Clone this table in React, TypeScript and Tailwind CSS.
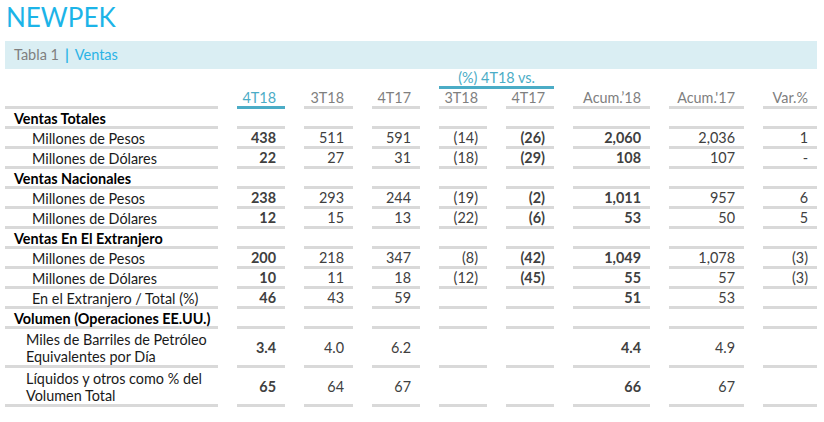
// Ventas table — NEWPEK quarterly report snippet.

type Row = {
  label: string[];
  kind: 'cat' | 'sub' | 'sub2';
  values?: string[];
};

const ROWS: Row[] = [
  { label: ['Ventas Totales'], kind: 'cat' },
  { label: ['Millones de Pesos'], kind: 'sub', values: ['438', '511', '591', '(14)', '(26)', '2,060', '2,036', '1'] },
  { label: ['Millones de Dólares'], kind: 'sub', values: ['22', '27', '31', '(18)', '(29)', '108', '107', '-'] },
  { label: ['Ventas Nacionales'], kind: 'cat' },
  { label: ['Millones de Pesos'], kind: 'sub', values: ['238', '293', '244', '(19)', '(2)', '1,011', '957', '6'] },
  { label: ['Millones de Dólares'], kind: 'sub', values: ['12', '15', '13', '(22)', '(6)', '53', '50', '5'] },
  { label: ['Ventas En El Extranjero'], kind: 'cat' },
  { label: ['Millones de Pesos'], kind: 'sub', values: ['200', '218', '347', '(8)', '(42)', '1,049', '1,078', '(3)'] },
  { label: ['Millones de Dólares'], kind: 'sub', values: ['10', '11', '18', '(12)', '(45)', '55', '57', '(3)'] },
  { label: ['En el Extranjero / Total (%)'], kind: 'sub', values: ['46', '43', '59', '', '', '51', '53', ''] },
  { label: ['Volumen (Operaciones EE.UU.)'], kind: 'cat' },
  { label: ['Miles de Barriles de Petróleo', 'Equivalentes por Día'], kind: 'sub2', values: ['3.4', '4.0', '6.2', '', '', '4.4', '4.9', ''] },
  { label: ['Líquidos y otros como % del', 'Volumen Total'], kind: 'sub2', values: ['65', '64', '67', '', '', '66', '67', ''] },
];

const HEADERS = ['4T18', '3T18', '4T17', '3T18', '4T17', 'Acum.’18', "Acum.'17", 'Var.%'];

// columns drawn in bold: 4T18, (%) 4T17, Acum.'18
const BOLD_COLS = [0, 4, 5];

const cellBase = 'border-b-[3px] border-[#d9d9d9] flex items-center';

function DataRow({ row }: { row: Row }) {
  const tall = row.kind === 'sub2';
  const h = tall ? 'h-[39px]' : 'h-5';
  const pad = row.kind === 'cat' ? 'pl-[9px]' : row.kind === 'sub' ? 'pl-[27px]' : 'pl-[21px]';
  return (
    <>
      <div
        className={`${cellBase} ${h} ${pad} ${
          row.kind === 'cat' ? 'font-bold text-black' : 'text-[#1a1a1a]'
        }`}
      >
        <div className="leading-[17px] pt-[1px]">
          {row.label.map((l) => (
            <div key={l}>{l}</div>
          ))}
        </div>
      </div>
      {Array.from({ length: 8 }).map((_, i) => {
        const v = row.values ? row.values[i] : '';
        return (
          <div
            key={i}
            className={`${cellBase} ${h} justify-end pr-[9px] pt-[1px] text-[#404040] ${
              BOLD_COLS.includes(i) ? 'font-bold' : ''
            }`}
          >
            {v}
          </div>
        );
      })}
    </>
  );
}

export default function App() {
  return (
    <div
      className="w-[824px] h-[422px] bg-white overflow-hidden text-[14.4px]"
      style={{ fontFamily: 'Lato, "Open Sans", sans-serif' }}
    >
      <div className="h-[41px] pl-[6px] pt-[1px] text-[26px] leading-[32px] text-[#1cb4e8]">
        NEWPEK
      </div>
      <div className="ml-[5px] w-[812px] h-[28px] bg-[#daeef3] flex items-center pl-[9px] text-[14.5px]">
        <span className="text-[#7f7f7f]">Tabla 1</span>
        <span className="text-[#2ab3e6] mx-[6px] font-bold">|</span>
        <span className="text-[#2ab3e6]">Ventas</span>
      </div>

      <div className="ml-[5px] grid grid-cols-[213px_48px_49px_48px_48px_48px_77px_75px_54px] gap-x-[19px]">
        {/* super header */}
        <div className="col-start-5 col-span-2 h-5 border-b-[3px] border-[#4bacc6] flex items-center justify-center pt-[1px] text-[#4bacc6]">
          (%) 4T18 vs.
        </div>

        {/* column header */}
        <div className={`${cellBase} h-5 col-start-1`} />
        {HEADERS.map((hd, i) => (
          <div
            key={i}
            className={`h-5 border-b-[3px] flex items-center justify-end pr-[9px] pt-[1px] ${
              i === 0 ? 'border-[#4bacc6] text-[#4bacc6]' : 'border-[#d9d9d9] text-[#7f7f7f]'
            }`}
          >
            {hd}
          </div>
        ))}

        {ROWS.map((r, i) => (
          <DataRow key={i} row={r} />
        ))}
      </div>
    </div>
  );
}
